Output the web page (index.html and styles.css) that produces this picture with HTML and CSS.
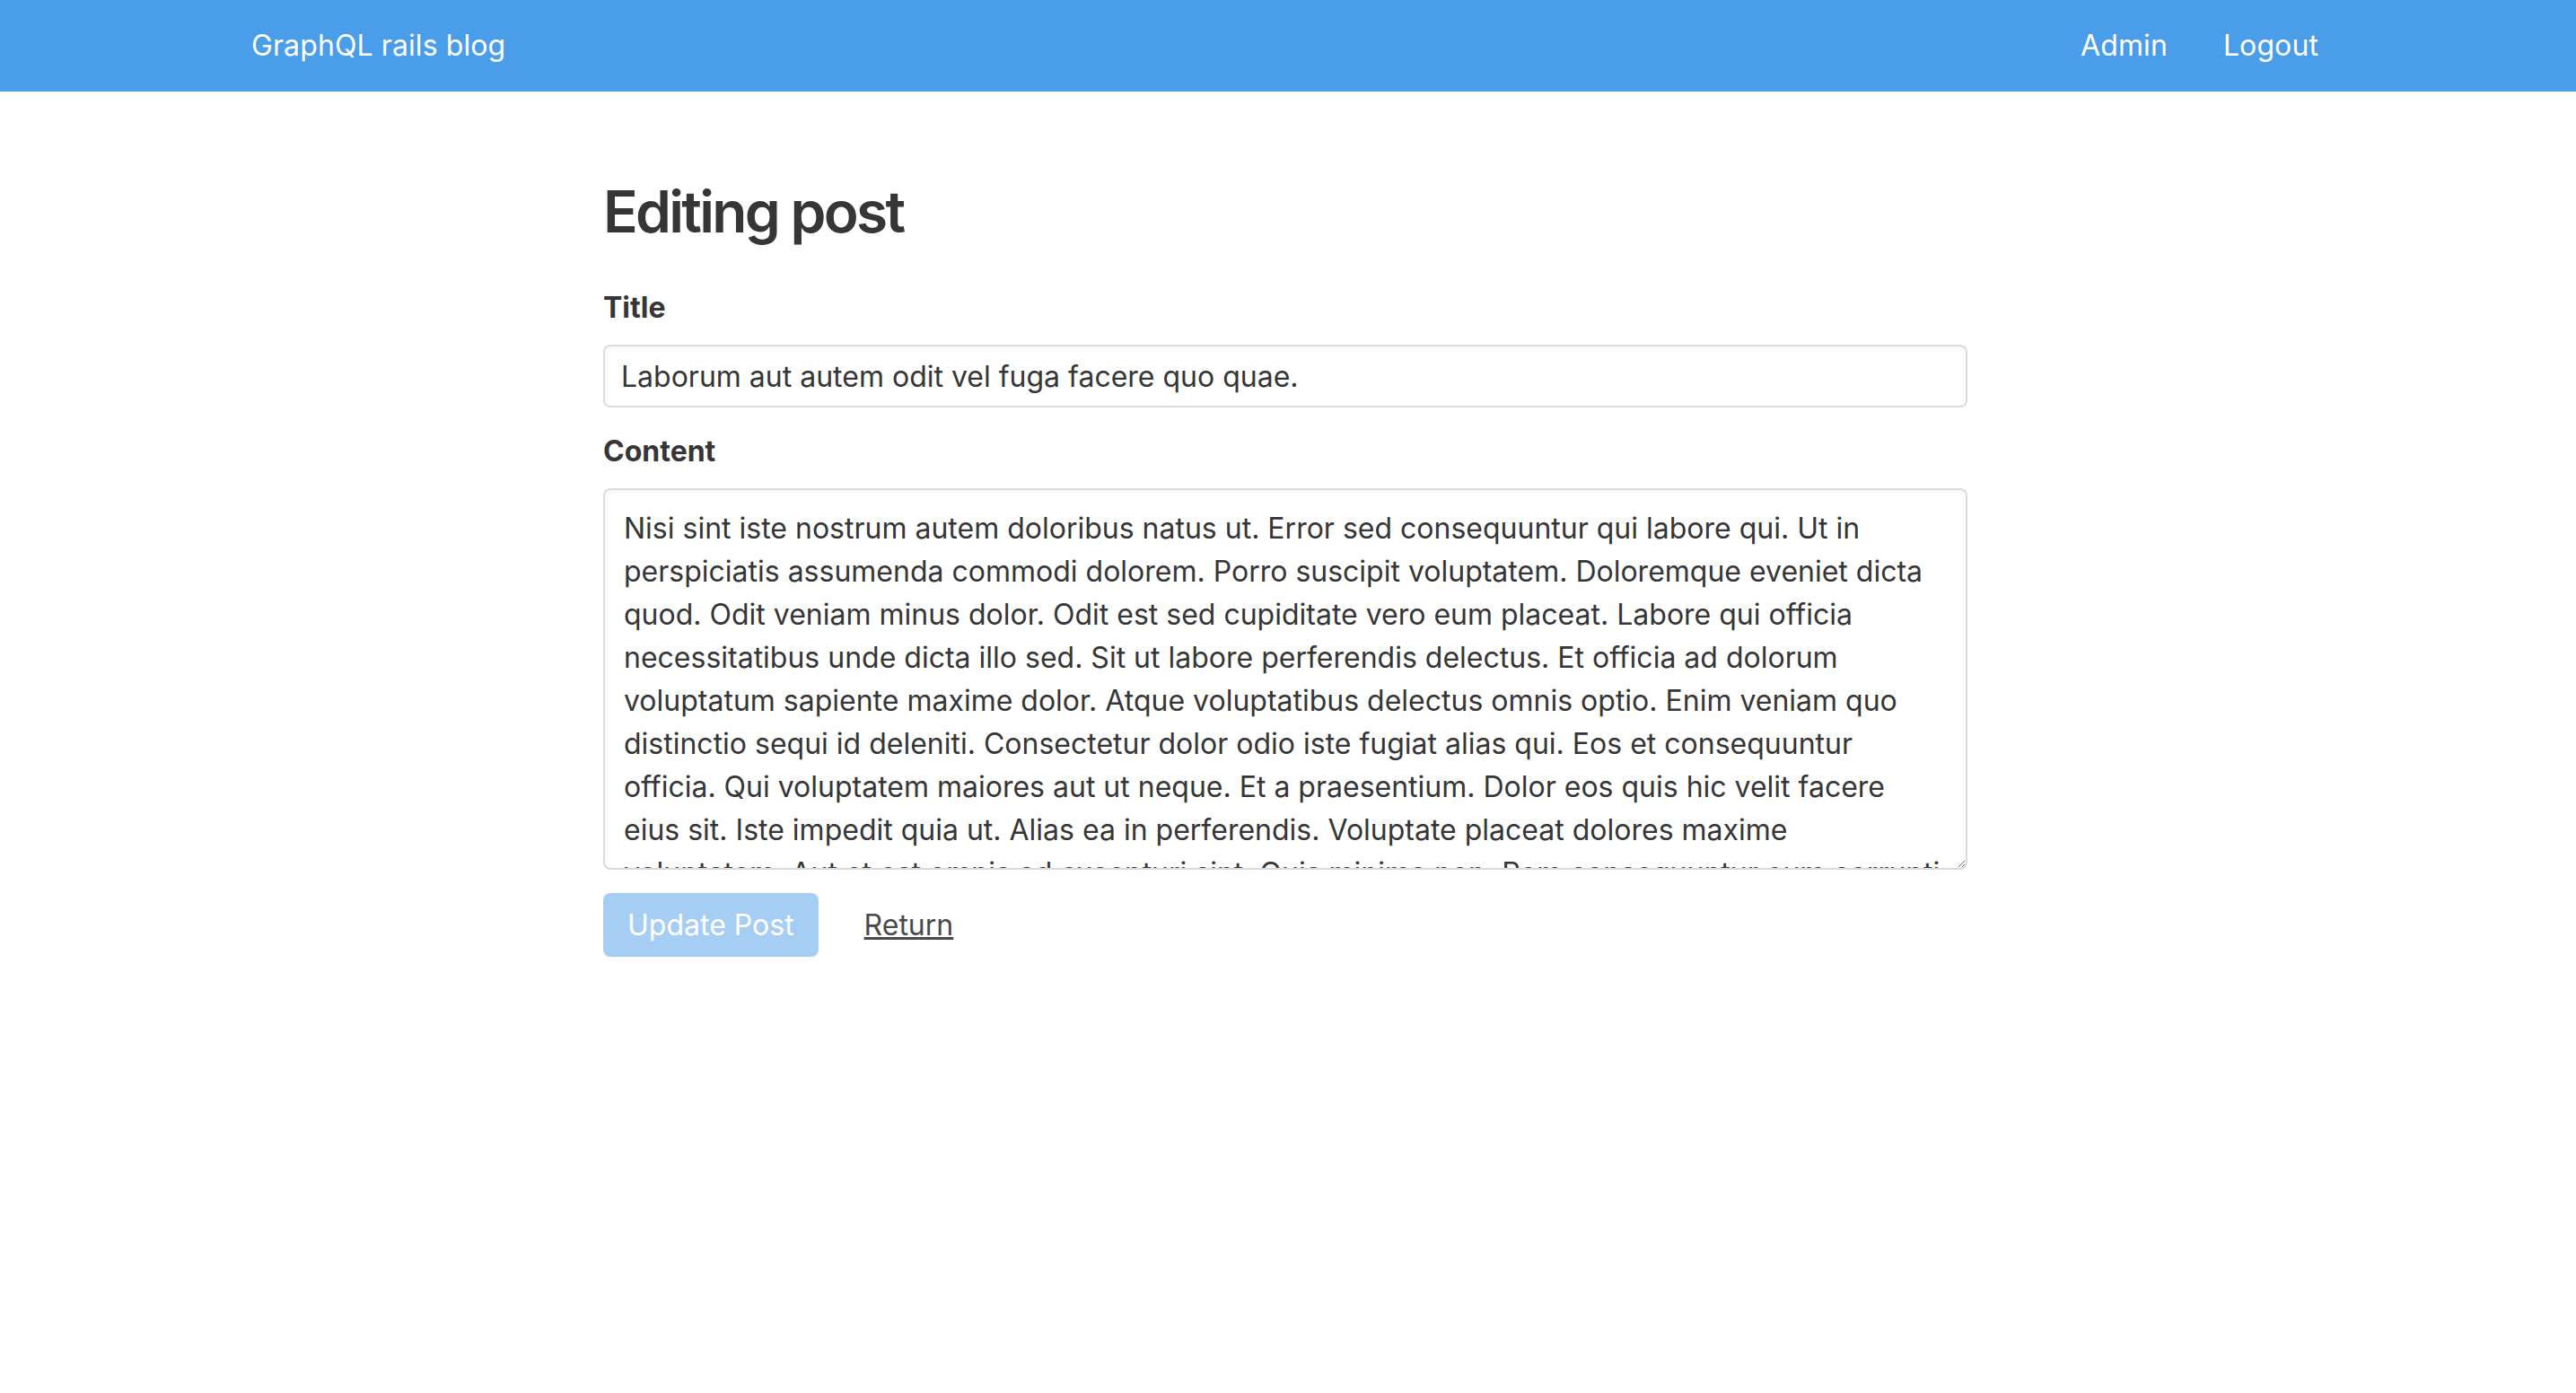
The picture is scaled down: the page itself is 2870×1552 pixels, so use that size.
FILE: index.html
```html
<!DOCTYPE html>
<html lang="en">
  <head>
    <meta charset="UTF-8" />
    <meta name="viewport" content="width=device-width, initial-scale=1.0" />
    <title>GraphQL rails blog</title>
    <link rel="stylesheet" href="styles.css">
  </head>
  <body>
    <nav class="navbar">
      <div class="navbarInner">
        <a class="brand" href="#">GraphQL rails blog</a>
        <div class="navLinks">
          <a href="#">Admin</a>
          <a href="#">Logout</a>
        </div>
      </div>
    </nav>
    <main class="page">
      <div class="content">
        <h1 class="title">Editing post</h1>
        <form class="postForm">
          <div class="field">
            <label class="label" for="post_title">Title</label>
            <input class="input" id="post_title" type="text" value="Laborum aut autem odit vel fuga facere quo quae." />
          </div>
          <div class="field">
            <label class="label" for="post_content">Content</label>
            <textarea class="textarea" id="post_content">Nisi sint iste nostrum autem doloribus natus ut. Error sed consequuntur qui labore qui. Ut in perspiciatis assumenda commodi dolorem. Porro suscipit voluptatem. Doloremque eveniet dicta quod. Odit veniam minus dolor. Odit est sed cupiditate vero eum placeat. Labore qui officia necessitatibus unde dicta illo sed. Sit ut labore perferendis delectus. Et officia ad dolorum voluptatum sapiente maxime dolor. Atque voluptatibus delectus omnis optio. Enim veniam quo distinctio sequi id deleniti. Consectetur dolor odio iste fugiat alias qui. Eos et consequuntur officia. Qui voluptatem maiores aut ut neque. Et a praesentium. Dolor eos quis hic velit facere eius sit. Iste impedit quia ut. Alias ea in perferendis. Voluptate placeat dolores maxime voluptatem. Aut et est omnis ad excepturi sint. Quis minima non. Rem consequuntur eum corrupti quia. Sed aut voluptas eius nihil.</textarea>
          </div>
          <div class="actions">
            <button class="button" type="submit" disabled>Update Post</button>
            <a class="returnLink" href="#">Return</a>
          </div>
        </form>
      </div>
    </main>
  </body>
</html>
```

FILE: styles.css
```css
* {
  margin: 0;
  padding: 0;
  box-sizing: border-box;
  font-family: "Inter", "Noto Sans", sans-serif;
}
body {
  background-color: #ffffff;
  color: #363636;
  font-size: 32px;
  line-height: 1.5;
}
a {
  text-decoration: none;
  color: inherit;
}
.navbar {
  background-color: #4a9de8;
  height: 102px;
}
.navbarInner {
  height: 100%;
  padding: 0 287px 0 280px;
  display: flex;
  justify-content: space-between;
  align-items: center;
  color: #ffffff;
  letter-spacing: 0.1px;
}
.navLinks {
  display: flex;
  gap: 62px;
}
.page {
  padding: 98px 6px 0 0;
}
.content {
  max-width: 1520px;
  margin: 0 auto;
}
.title {
  font-size: 64px;
  font-weight: 600;
  line-height: 1.125;
  letter-spacing: -2.7px;
  margin-bottom: 47px;
}
.field {
  margin-bottom: 25px;
}
.label {
  display: block;
  font-weight: 700;
  margin-bottom: 17px;
}
.input,
.textarea {
  display: block;
  width: 100%;
  border: 2px solid #dbdbdb;
  border-radius: 8px;
  box-shadow: inset 0 2px 4px rgba(10, 10, 10, 0.05);
  color: #363636;
  font-size: 32px;
  outline: none;
  background: #ffffff;
}
.input {
  height: 70px;
  padding: 0 18px;
}
.textarea {
  height: 425px;
  padding: 19px 21px;
  line-height: 48px;
  resize: vertical;
  scrollbar-width: none;
}
.actions {
  display: flex;
  align-items: center;
  gap: 51px;
  padding-top: 1px;
}
.button {
  height: 71px;
  padding: 0 27px;
  border: none;
  border-radius: 8px;
  background-color: #a6cdf3;
  color: #ffffff;
  font-size: 32px;
}
.returnLink {
  color: #4a4a4a;
  text-decoration: underline;
}
```
